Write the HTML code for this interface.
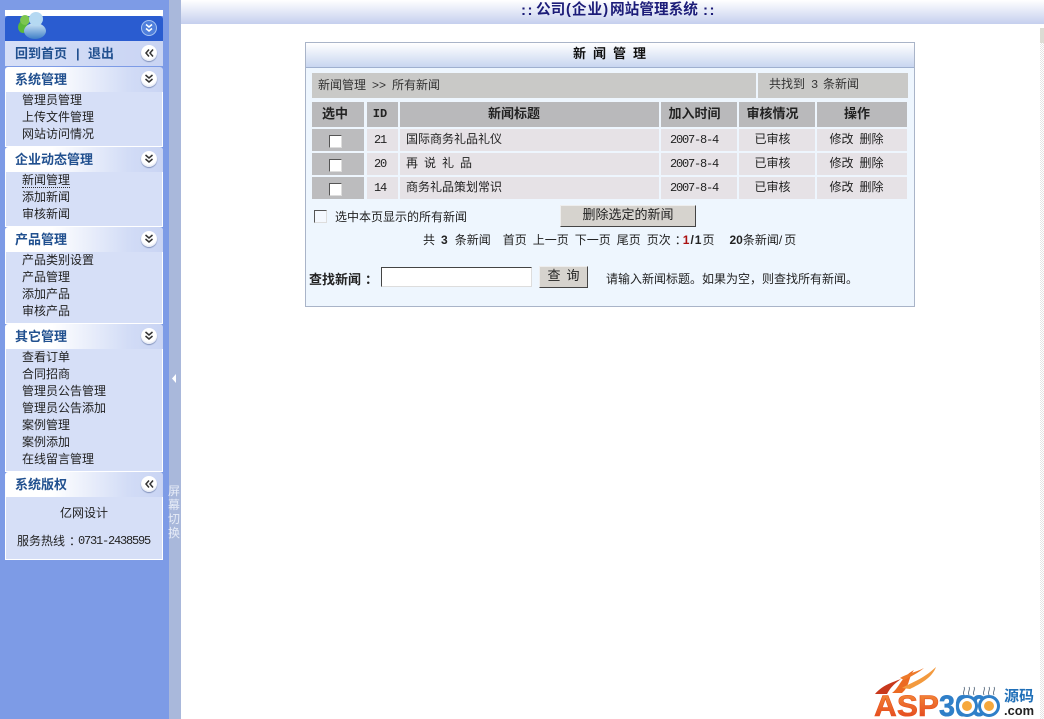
<!DOCTYPE html>
<html lang="zh-CN"><head><meta charset="utf-8"><title>网站管理系统</title>
<style>
html,body{margin:0;padding:0;width:1044px;height:719px;overflow:hidden;background:#fff}
body{position:relative;font:12px/17px "Liberation Sans","WenQuanYi Zen Hei","Noto Sans CJK SC",sans-serif;color:#222;word-spacing:2.67px}
div,a{position:absolute;white-space:nowrap;box-sizing:border-box}
b{font-weight:bold}
.n{font:12px "Liberation Mono",monospace;letter-spacing:-1.2px;word-spacing:0}
.cl{position:relative;left:4px}
.hd{left:5px;width:158px;height:25px;background:linear-gradient(90deg,#fff 0,#fff 30%,#d2dcf6 78%,#c9d4f3 100%);border-radius:3px 3px 0 0;font-weight:bold;font-size:13px;line-height:25px;padding-left:10px;color:#21508f}
.bd{left:5px;width:158px;background:#d6dff7;border:1px solid #fff;border-top:0}
.it{left:22px;height:17px;color:#222;line-height:17px}
.ci{left:141px;width:16px;height:16px;border-radius:8px;background:radial-gradient(circle at 50% 40%,#fff 55%,#c3cde6 100%);box-shadow:0 1px 1px #7f8fb8}
.ci svg{position:absolute;left:0;top:0}
.c{background:#e6e2e6;text-align:center;line-height:20px;height:22px}
.th{background:#b9b9bb;text-align:center;font-weight:bold;font-size:13px;height:25px;line-height:23px;top:102px}
.ck{width:13px;height:13px;background:#fff;border:1px solid;border-color:#555 #ddd #ddd #555}
.k{background:#bcbcbe;left:312px;width:52px}
.a{left:367px;width:31px;padding-right:5px}
.t{left:400px;width:259px;text-align:left;padding-left:6px}
.d{left:661px;width:76px;text-align:left;padding-left:9px}
.s{left:739px;width:76px;padding-right:9px}
.o{left:817px;width:90px;padding-right:11px}
</style></head><body>
<div style="left:0;top:0;width:169px;height:719px;background:#7d9be6"></div>
<div style="left:169px;top:0;width:12px;height:719px;background:#a9b8db"></div>
<svg style="position:absolute;left:171px;top:374px" width="6" height="9"><path d="M5 0V9L1 4.5Z" fill="#fff"/></svg>
<div style="left:168px;top:484px;width:14px;color:#e6ebf7;line-height:14px;white-space:normal">屏幕切换</div>

<div style="left:181px;top:0;width:863px;height:24px;background:linear-gradient(#fff,#c5cfee)"></div>
<div style="left:521px;top:1px;font-weight:bold;font-size:15px;line-height:19px;color:#1c1c78;letter-spacing:1.500px">::</div>
<div style="left:536px;top:1px;font-weight:bold;font-size:14.67px;line-height:19px;color:#1c1c78">公司</div>
<div style="left:566px;top:1px;font-weight:bold;font-size:14.67px;line-height:19px;color:#1c1c78;letter-spacing:1px">(企业)</div>
<div style="left:610px;top:1px;font-weight:bold;font-size:14.67px;line-height:19px;color:#1c1c78">网站管理系统</div>
<div style="left:703px;top:1px;font-weight:bold;font-size:15px;line-height:19px;color:#1c1c78;letter-spacing:1.500px">::</div>
<div style="left:1040px;top:28px;width:4px;height:15px;background:#dcdcd4"></div>
<div style="left:1040px;top:43px;width:4px;height:676px;background:repeating-conic-gradient(#e4e4e4 0 25%,#fff 0 50%) 0 0/2px 2px"></div>

<div style="left:5px;top:10px;width:158px;height:6px;background:#fff"></div>
<div style="left:5px;top:16px;width:158px;height:25px;background:#2a5cd0;border-radius:3px 3px 0 0"></div>
<svg style="position:absolute;left:15px;top:8px" width="36" height="34"><defs><linearGradient id="bl" x1="0" y1="0" x2="0" y2="1"><stop offset="0" stop-color="#cfe6f6"/><stop offset="1" stop-color="#3f7fc6"/></linearGradient></defs><ellipse cx="8" cy="19" rx="5" ry="6" fill="#5cb83a"/><circle cx="10" cy="12" r="5" fill="#7cc650"/><ellipse cx="20" cy="23" rx="11" ry="8" fill="url(#bl)"/><circle cx="21" cy="11" r="7" fill="#b5d9f2"/></svg>
<div class="ci" style="top:20px;background:#4f7fdc;border:1px solid #a9c4f2;box-shadow:none"><svg width="14" height="14"><path d="M4 3.500L7 6L10 3.500M4 7.500L7 10L10 7.500" fill="none" stroke="#fff" stroke-width="1.500"/></svg></div>

<div style="left:5px;top:41px;width:158px;height:25px;background:linear-gradient(90deg,#d6dff7,#c9d4f3)"></div>
<div style="left:15px;top:41px;font-weight:bold;font-size:13px;line-height:26px;color:#21508f">回到首页</div>
<div style="left:76px;top:41px;font-weight:bold;font-size:13px;line-height:26px;color:#21508f">|</div>
<div style="left:88px;top:41px;font-weight:bold;font-size:13px;line-height:26px;color:#21508f">退出</div>
<div class="ci" style="top:45px"><svg width="16" height="16"><path d="M8 4.500L5 8L8 11.500M12 4.500L9 8L12 11.500" fill="none" stroke="#333" stroke-width="1.500"/></svg></div>

<div class="hd" style="top:67px">系统管理</div>
<div class="ci" style="top:71px"><svg width="16" height="16"><path d="M4.500 4L8 7L11.500 4M4.500 8L8 11L11.500 8" fill="none" stroke="#333" stroke-width="1.500"/></svg></div>
<div class="bd" style="top:92px;height:55px"></div>
<div class="it" style="top:92px">管理员管理</div><div class="it" style="top:109px">上传文件管理</div><div class="it" style="top:126px">网站访问情况</div>

<div class="hd" style="top:147px">企业动态管理</div>
<div class="ci" style="top:151px"><svg width="16" height="16"><path d="M4.500 4L8 7L11.500 4M4.500 8L8 11L11.500 8" fill="none" stroke="#333" stroke-width="1.500"/></svg></div>
<div class="bd" style="top:172px;height:55px"></div>
<div class="it" style="top:172px;border-bottom:1px dotted #333;height:16px">新闻管理</div><div class="it" style="top:189px">添加新闻</div><div class="it" style="top:206px">审核新闻</div>

<div class="hd" style="top:227px">产品管理</div>
<div class="ci" style="top:231px"><svg width="16" height="16"><path d="M4.500 4L8 7L11.500 4M4.500 8L8 11L11.500 8" fill="none" stroke="#333" stroke-width="1.500"/></svg></div>
<div class="bd" style="top:252px;height:72px"></div>
<div class="it" style="top:252px">产品类别设置</div><div class="it" style="top:269px">产品管理</div><div class="it" style="top:286px">添加产品</div><div class="it" style="top:303px">审核产品</div>

<div class="hd" style="top:324px">其它管理</div>
<div class="ci" style="top:328px"><svg width="16" height="16"><path d="M4.500 4L8 7L11.500 4M4.500 8L8 11L11.500 8" fill="none" stroke="#333" stroke-width="1.500"/></svg></div>
<div class="bd" style="top:349px;height:123px"></div>
<div class="it" style="top:349px">查看订单</div><div class="it" style="top:366px">合同招商</div><div class="it" style="top:383px">管理员公告管理</div><div class="it" style="top:400px">管理员公告添加</div><div class="it" style="top:417px">案例管理</div><div class="it" style="top:434px">案例添加</div><div class="it" style="top:451px">在线留言管理</div>

<div class="hd" style="top:472px">系统版权</div>
<div class="ci" style="top:476px"><svg width="16" height="16"><path d="M8 4.500L5 8L8 11.500M12 4.500L9 8L12 11.500" fill="none" stroke="#333" stroke-width="1.500"/></svg></div>
<div class="bd" style="top:497px;height:63px"></div>
<div style="left:5px;width:158px;top:505px;text-align:center">亿网设计</div>
<div style="left:17px;top:533px">服务热线<span class="cl">：</span><span class="n" style="position:absolute;left:61px;top:0;line-height:17px">0731-2438595</span></div>

<!-- main panel -->
<div style="left:305px;top:42px;width:610px;height:265px;background:#eef6fe;border:1px solid #a9b4c8"></div>
<div style="left:306px;top:43px;width:608px;height:25px;background:linear-gradient(#fff,#c8d6f0);border-bottom:1px solid #9fb0cf"></div>
<div style="left:573px;top:43px;font-weight:bold;font-size:13px;line-height:22px;color:#111;word-spacing:3.400px">新 闻 管 理</div>
<div style="left:312px;top:73px;width:444px;height:25px;background:#c9c9c7;padding-left:6px;line-height:24px;color:#333">新闻管理 &gt;&gt; 所有新闻</div>
<div style="left:758px;top:73px;width:150px;height:25px;background:#c9c9c7;padding-left:11px;line-height:23px;color:#333">共找到 <span class="n">3</span> 条新闻</div>

<div class="th" style="left:312px;width:52px;padding-right:6px">选中</div>
<div class="th" style="left:367px;width:31px;padding-right:5px;font-family:'Liberation Mono',monospace;font-size:12px;line-height:25px">ID</div>
<div class="th" style="left:400px;width:259px;padding-right:31px">新闻标题</div>
<div class="th" style="left:661px;width:76px;padding-right:9px">加入时间</div>
<div class="th" style="left:739px;width:76px;padding-right:9px">审核情况</div>
<div class="th" style="left:817px;width:90px;padding-right:10px">操作</div>

<div class="c k" style="top:129px"></div><div class="ck" style="left:329px;top:135px"></div>
<div class="c a" style="top:129px"><span class="n">21</span></div>
<div class="c t" style="top:129px">国际商务礼品礼仪</div>
<div class="c d" style="top:129px"><span class="n">2007-8-4</span></div>
<div class="c s" style="top:129px">已审核</div>
<div class="c o" style="top:129px">修改 删除</div>

<div class="c k" style="top:153px"></div><div class="ck" style="left:329px;top:159px"></div>
<div class="c a" style="top:153px"><span class="n">20</span></div>
<div class="c t" style="top:153px">再 说 礼 品</div>
<div class="c d" style="top:153px"><span class="n">2007-8-4</span></div>
<div class="c s" style="top:153px">已审核</div>
<div class="c o" style="top:153px">修改 删除</div>

<div class="c k" style="top:177px"></div><div class="ck" style="left:329px;top:183px"></div>
<div class="c a" style="top:177px"><span class="n">14</span></div>
<div class="c t" style="top:177px">商务礼品策划常识</div>
<div class="c d" style="top:177px"><span class="n">2007-8-4</span></div>
<div class="c s" style="top:177px">已审核</div>
<div class="c o" style="top:177px">修改 删除</div>

<div class="ck" style="left:314px;top:210px;background:#f4f8fe"></div>
<div style="left:335px;top:209px">选中本页显示的所有新闻</div>
<div style="left:560px;top:205px;width:136px;height:22px;background:#d6d3ce;border:1px solid;border-color:#eee #444 #444 #eee;text-align:center;font-size:13px;line-height:18px">删除选定的新闻</div>
<div style="left:423px;top:232px">共 <b style="letter-spacing:1px">3</b> 条新闻&nbsp; 首页 上一页 下一页 尾页 页次<span class="cl">：</span><b style="color:#a11;letter-spacing:1px">1</b><b style="letter-spacing:1px">/1</b>页&nbsp; &nbsp;<b style="margin-left:-3px">20</b>条新闻<span style="letter-spacing:2px">/</span>页</div>
<div style="left:309px;top:271px;font-weight:bold;font-size:13px;color:#222">查找新闻<span class="cl">：</span></div>
<div style="left:381px;top:267px;width:151px;height:20px;background:#fff;border:1px solid;border-color:#444 #ddd #ddd #444"></div>
<div style="left:539px;top:266px;width:49px;height:22px;background:#d6d3ce;border:1px solid;border-color:#eee #444 #444 #eee;text-align:center;font-size:13px;line-height:18px;word-spacing:2.400px">查 询</div>
<div style="left:606px;top:271px">请输入新闻标题。如果为空，则查找所有新闻。</div>

<!-- logo -->
<svg style="position:absolute;left:870px;top:664px" width="170" height="55">
<defs><linearGradient id="og" x1="0" y1="0" x2="0" y2="1"><stop offset="0" stop-color="#f4913a"/><stop offset="1" stop-color="#e23c1a"/></linearGradient></defs>
<path d="M5 30C12 22 20 19 31 15C24 20 20 24 17 30Z" fill="#c8381c"/>
<path d="M22 29C30 23 30 14 44 6C38 14 40 22 32 29Z" fill="#ec6a22"/>
<path d="M32 24C42 18 52 16 66 3C62 14 50 20 40 25Z" fill="#f39a3e"/>
<path d="M30 14C36 10 44 9 54 4C48 9 40 13 34 16Z" fill="#ee7a2a"/>
<text x="4" y="52" font-family="Liberation Sans" font-weight="bold" font-size="30" fill="url(#og)" stroke="#e8541e" stroke-width=".6" textLength="65" lengthAdjust="spacingAndGlyphs">ASP</text>
<text x="69" y="52" font-family="Liberation Sans" font-weight="bold" font-size="30" fill="#2f7fc8" stroke="#2f7fc8" stroke-width=".6" textLength="48" lengthAdjust="spacingAndGlyphs">300</text>
<circle cx="97" cy="42" r="9.500" fill="#fff" stroke="#2f7fc8" stroke-width="3"/><circle cx="119" cy="42" r="9.500" fill="#fff" stroke="#2f7fc8" stroke-width="3"/>
<circle cx="97" cy="42" r="5" fill="#f6a83c"/><circle cx="119" cy="42" r="5" fill="#f6a83c"/>
<path d="M94 31C92 27 96 26 94 23M99 31C97 27 101 26 99 23M104 31C102 27 106 26 104 23M114 31C112 27 116 26 114 23M119 31C117 27 121 26 119 23M124 31C122 27 126 26 124 23" fill="none" stroke="#6a7a8c" stroke-width="1"/>
<text x="134" y="37" font-family="Noto Sans CJK SC,sans-serif" font-weight="bold" font-size="15" fill="#1f6fb8" word-spacing="0">源码</text>
<text x="134" y="51" font-family="Liberation Sans" font-weight="bold" font-size="13" fill="#222" textLength="30" lengthAdjust="spacingAndGlyphs">.com</text>
</svg>
</body></html>
